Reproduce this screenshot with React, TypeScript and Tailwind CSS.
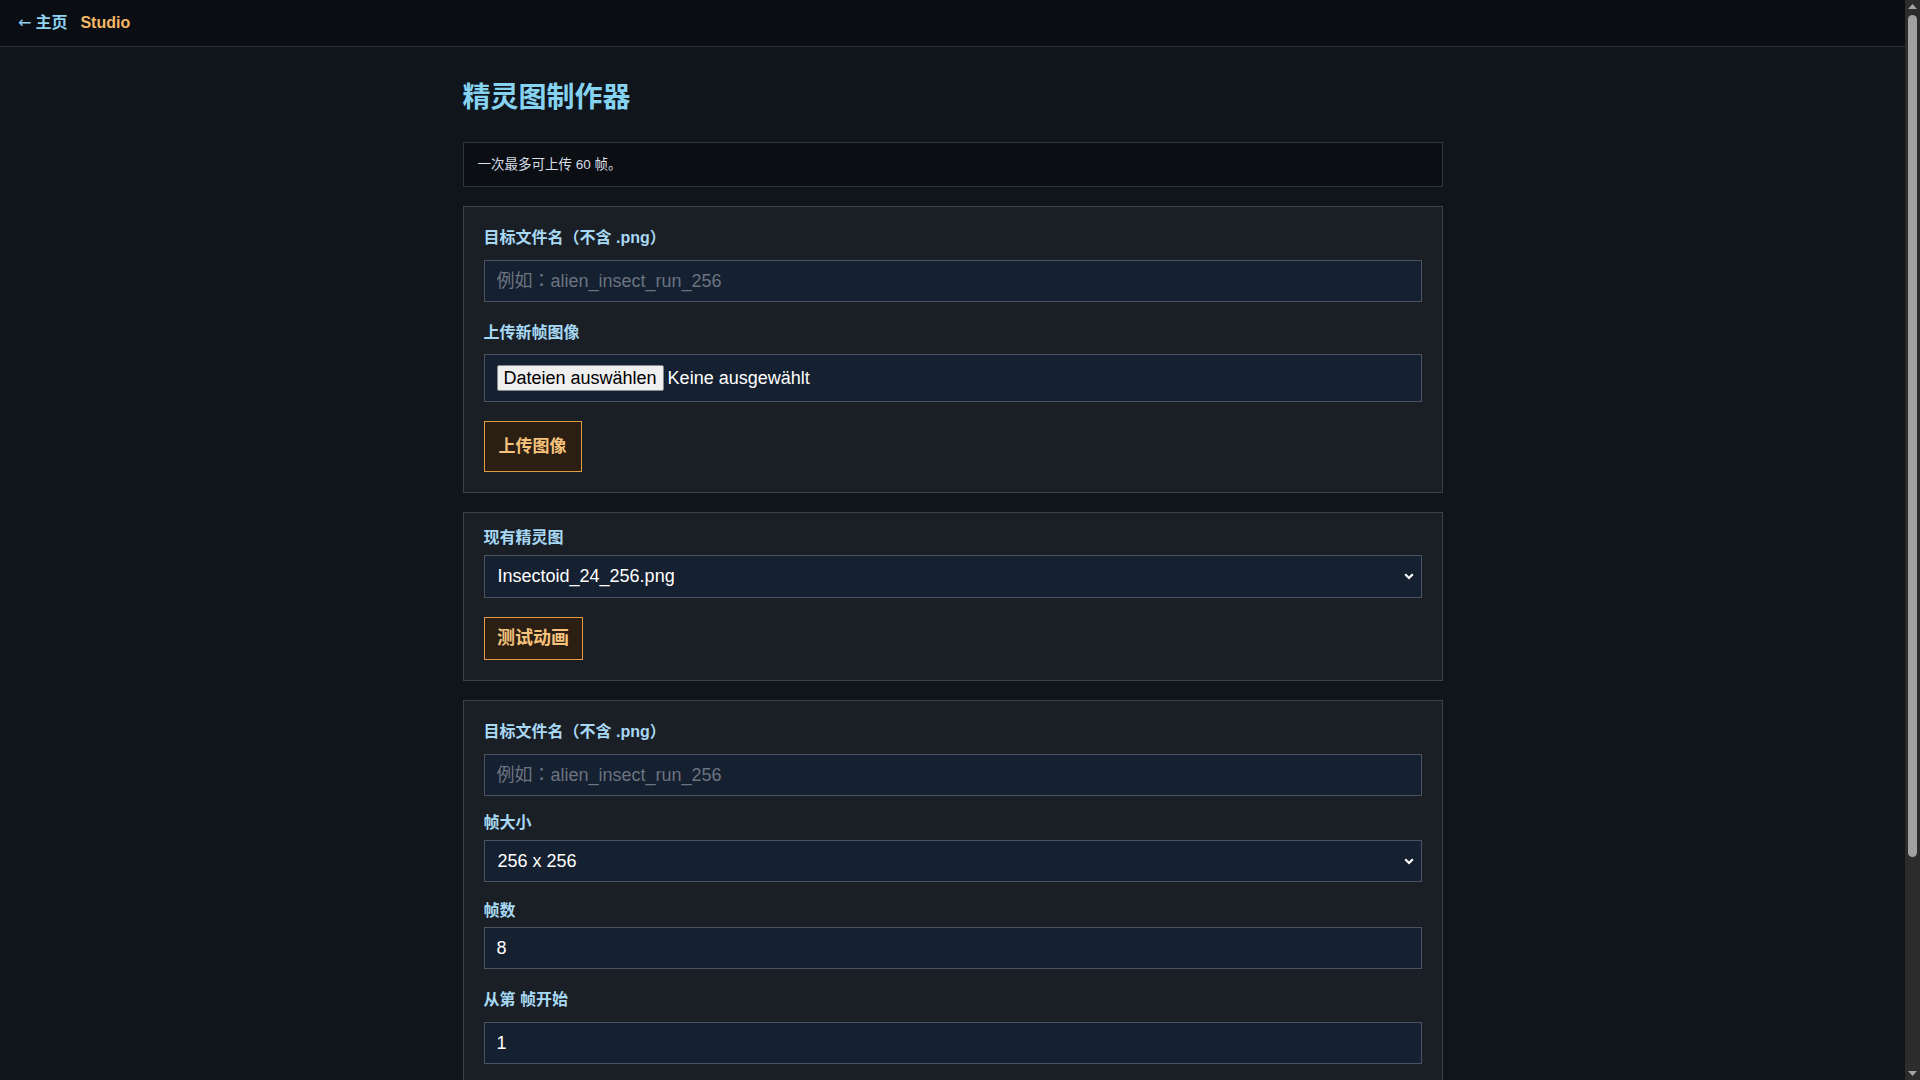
function Label({ children, className = "" }: { children: React.ReactNode; className?: string }) {
  return (
    <label className={`block text-[16px] font-bold leading-[22px] text-[#a8d9f4] ${className}`}>{children}</label>
  );
}

function TextField({ placeholder, value, className = "" }: { placeholder?: string; value?: string; className?: string }) {
  return (
    <input
      className={`block h-[42px] w-full border border-[#4a5361] bg-[#152030] px-3 font-['Liberation_Sans','Noto_Sans_CJK_JP',sans-serif] text-[18px] text-white outline-none placeholder:text-[#6b7480] ${className}`}
      placeholder={placeholder}
      defaultValue={value}
      type="text"
    />
  );
}

function SelectBox({ value, className = "" }: { value: string; className?: string }) {
  return (
    <div
      className={`flex w-full items-center justify-between border border-[#4a5361] bg-[#152030] pl-[13px] pr-[7px] text-[18px] text-white ${className}`}
    >
      <span>{value}</span>
      <svg width="10" height="7" viewBox="0 0 10 7" fill="none">
        <path d="M1.2 1.2 L5 5 L8.8 1.2" stroke="#ffffff" strokeWidth="2.2" />
      </svg>
    </div>
  );
}

function Card({ children, className = "" }: { children: React.ReactNode; className?: string }) {
  return <section className={`border border-[#3a414b] bg-[#1a1e25] px-5 ${className}`}>{children}</section>;
}

function OrangeButton({ children, className = "" }: { children: React.ReactNode; className?: string }) {
  return (
    <button className={`block border border-[#e39b42] bg-[#2b1f13] font-bold text-[#f6c27c] ${className}`}>
      {children}
    </button>
  );
}

function Scrollbar() {
  return (
    <div className="flex w-[15px] shrink-0 flex-col items-center bg-[#2c2c2c] pb-[4px] pt-[4px]">
      <svg width="9" height="5" viewBox="0 0 9 5">
        <path d="M0 5 L4.5 0 L9 5 Z" fill="#a3a3a3" />
      </svg>
      <div className="mt-[6px] h-[842px] w-[9px] rounded-full bg-[#a1a1a1]" />
      <div className="flex-1" />
      <svg width="9" height="5" viewBox="0 0 9 5">
        <path d="M0 0 L4.5 5 L9 0 Z" fill="#a3a3a3" />
      </svg>
    </div>
  );
}

export default function App() {
  return (
    <div className="flex h-screen bg-[#10141b] font-['Liberation_Sans','Noto_Sans_CJK_SC',sans-serif]">
      <div className="min-w-0 flex-1 overflow-hidden">
        {/* Top bar */}
        <header className="flex h-[47px] items-center gap-[13px] border-b border-[#2a333f] bg-[#0a0d12] px-[18px] text-[16px] font-bold">
          <a className="flex items-center gap-[4px] text-[#8fd2f1]">
            <span className="font-['DejaVu_Sans',sans-serif] font-normal">←</span>
            主页
          </a>
          <a className="text-[#f6b866]">Studio</a>
        </header>

        <main className="mx-auto w-[980px] pb-[24px] pt-[34px]">
          <h1 className="text-[28px] font-bold leading-[34px] text-[#86d3f1]">精灵图制作器</h1>

          <div className="mt-[27px] border border-[#2e353e] bg-[#0b0e13] px-[14px] py-[13px] text-[13.5px] leading-[17px] text-[#d8dee6]">
            一次最多可上传 60 帧。
          </div>

          {/* Upload frames */}
          <Card className="mt-[19px] pb-5 pt-5">
            <Label className="mb-[11px]">目标文件名（不含 .png）</Label>
            <TextField placeholder="例如：alien_insect_run_256" />
            <Label className="mb-[10px] mt-[20px]">上传新帧图像</Label>
            <div className="flex h-[48px] items-center border border-[#4a5361] bg-[#152030] pl-[12px] text-[18px] text-white">
              <span className="flex h-[26px] items-center rounded-[2px] border border-[#8a8a8a] bg-[#efefef] px-[6px] text-black">
                Dateien auswählen
              </span>
              <span className="ml-[4px]">Keine ausgewählt</span>
            </div>
            <OrangeButton className="mt-[19px] h-[51px] w-[98px] text-[17px]">上传图像</OrangeButton>
          </Card>

          {/* Existing sprite sheet */}
          <Card className="mt-[19px] pb-5 pt-[14px]">
            <Label className="mb-[6px]">现有精灵图</Label>
            <SelectBox value="Insectoid_24_256.png" className="h-[43px]" />
            <OrangeButton className="mt-[19px] h-[43px] w-[99px] text-[18px]">测试动画</OrangeButton>
          </Card>

          {/* Build from sheet */}
          <Card className="mt-[19px] pb-5 pt-5">
            <Label className="mb-[11px]">目标文件名（不含 .png）</Label>
            <TextField placeholder="例如：alien_insect_run_256" />
            <Label className="mb-[6px] mt-[16px]">帧大小</Label>
            <SelectBox value="256 x 256" className="h-[42px]" />
            <Label className="mb-[5px] mt-[18px]">帧数</Label>
            <TextField value="8" />
            <Label className="mb-[11px] mt-[20px]">从第 帧开始</Label>
            <TextField value="1" className="h-[41px]" />
          </Card>
        </main>
      </div>
      <Scrollbar />
    </div>
  );
}
